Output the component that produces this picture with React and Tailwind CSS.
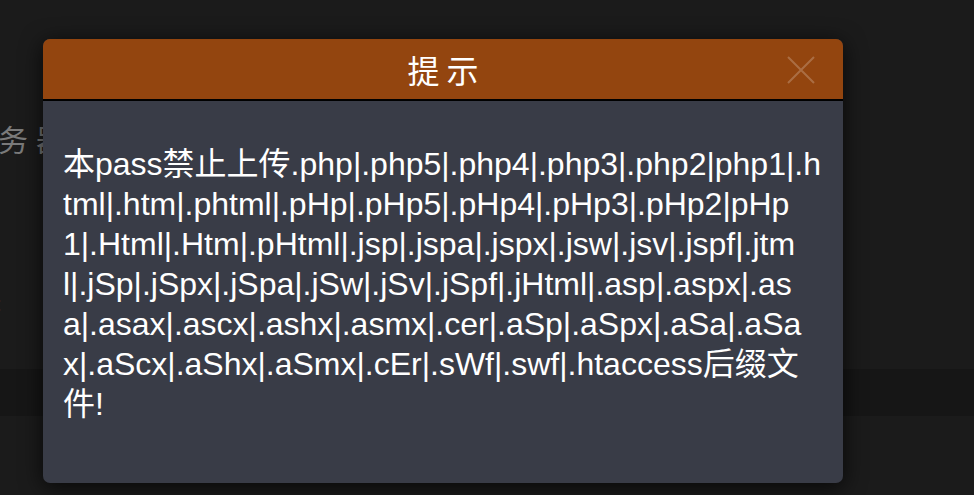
import React from "react";

const lines = [
  "本pass禁止上传.php|.php5|.php4|.php3|.php2|php1|.h",
  "tml|.htm|.phtml|.pHp|.pHp5|.pHp4|.pHp3|.pHp2|pHp",
  "1|.Html|.Htm|.pHtml|.jsp|.jspa|.jspx|.jsw|.jsv|.jspf|.jtm",
  "l|.jSp|.jSpx|.jSpa|.jSw|.jSv|.jSpf|.jHtml|.asp|.aspx|.as",
  "a|.asax|.ascx|.ashx|.asmx|.cer|.aSp|.aSpx|.aSa|.aSa",
  "x|.aScx|.aShx|.aSmx|.cEr|.sWf|.swf|.htaccess后缀文",
  "件!",
];

const font = { fontFamily: '"Liberation Sans", "Noto Sans CJK SC", sans-serif' };

export default function App() {
  return (
    <div className="relative w-[974px] h-[495px] overflow-hidden bg-[#1b1b1b]" style={font}>
      {/* page behind the modal */}
      <div className="flex flex-col">
        <div className="h-[121px]" />
        <div className="flex -ml-[40px] text-[30px] leading-[40px] tracking-[8px] text-[#7a7a7a]">
          服务器
        </div>
        <div className="h-[131px]" />
        <div className="-ml-[4px] text-[20px] leading-[24px] text-[#7a7a7a]">:</div>
        <div className="h-[53px]" />
        <div className="h-[47px] bg-[#161616]" />
      </div>

      {/* modal */}
      <div className="absolute left-[43px] top-[39px] w-[800px] h-[444px] flex flex-col rounded-[7px] bg-[#393c47] shadow-[0_4px_22px_rgba(0,0,0,0.75)] overflow-hidden">
        <div className="relative h-[62px] shrink-0 flex items-center justify-center bg-[#93450f] border-b-2 border-black">
          <span className="text-[32px] leading-none text-white" style={{ fontFamily: '"Noto Sans CJK SC", sans-serif' }}>
            提 示
          </span>
          <svg className="absolute right-[28px] top-[17px]" width="28" height="28" viewBox="0 0 28 28">
            <path d="M1 1 L27 27 M27 1 L1 27" stroke="rgba(255,255,255,0.22)" strokeWidth="2" fill="none" />
          </svg>
        </div>
        <div className="px-[20px] pt-[43px] text-[32px] leading-[40px] text-white">
          {lines.map((l, i) => (
            <div key={i} className="whitespace-nowrap">{l}</div>
          ))}
        </div>
      </div>
    </div>
  );
}
